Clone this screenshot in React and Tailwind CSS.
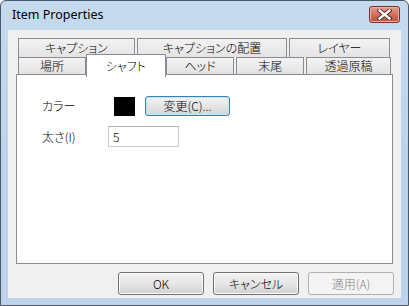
import React, { useState } from 'react';

const topTabs = [
  { label: 'キャプション', w: 'w-[117px]' },
  { label: 'キャプションの配置', w: 'w-[150px]' },
  { label: 'レイヤー', w: 'w-[101px]' },
];

const bottomTabs = [
  { label: '場所', w: 'w-[68px]' },
  { label: 'シャフト', w: 'w-[74px]' },
  { label: 'ヘッド', w: 'w-[69px]' },
  { label: '末尾', w: 'w-[68px]' },
  { label: '透過原稿', w: 'w-[85px]' },
];

const Tab = ({ label, w, selected, onClick }) => {
  if (selected) {
    return (
      <div
        onClick={onClick}
        className={`${w} relative z-10 mx-[-2px] mt-[-3px] h-[22px] box-content px-[2px] border border-b-0 border-[#898c95] bg-white flex items-center justify-center text-[12px] text-black`}
      >
        {label}
      </div>
    );
  }
  return (
    <div
      onClick={onClick}
      className={`${w} h-full border border-b-0 border-[#898c95] bg-gradient-to-b from-[#f3f3f3] to-[#e3e3e3] flex items-center justify-center text-[12px] text-black`}
    >
      {label}
    </div>
  );
};

const Button = ({ children, disabled }) => {
  if (disabled) {
    return (
      <div className="w-[86px] h-[23px] rounded-[3px] border border-[#adb2b5] bg-[#f4f4f4] flex items-center justify-center text-[12px] text-[#838383]">
        {children}
      </div>
    );
  }
  return (
    <div className="w-[86px] h-[23px] rounded-[3px] border border-[#707070] shadow-[inset_0_0_0_1px_#fcfcfc] bg-gradient-to-b from-[#f2f2f2] via-[#e6e6e6] to-[#d0d0d0] flex items-center justify-center text-[12px] text-black">
      {children}
    </div>
  );
};

export default function App() {
  const [tab, setTab] = useState('シャフト');
  const [width, setWidth] = useState('5');

  return (
    <div className="w-[409px] h-[306px] flex flex-col rounded-t-[6px] border border-[#4d5866] bg-gradient-to-b from-[#c6daef] via-[#bcd3eb] to-[#bcd3eb] overflow-hidden font-['Noto_Sans_CJK_JP','Liberation_Sans',sans-serif] font-light [font-feature-settings:'palt']">
      {/* title bar */}
      <div className="h-[29px] flex items-center justify-between pl-[11px] pr-[8px]">
        <span className="text-[12.5px] font-normal text-black font-['Noto_Sans',sans-serif]">
          Item Properties
        </span>
        <div className="w-[31px] h-[17px] mb-[2px] rounded-[3px] border border-[#7a2f26] bg-gradient-to-b from-[#e3a090] via-[#d0705f] to-[#c14a38] flex items-center justify-center shadow-[inset_0_0_0_1px_#eab3a6]">
          <svg width="15" height="11" viewBox="0 0 15 11">
            <path d="M2.5 1.5 L12.5 9.5 M12.5 1.5 L2.5 9.5" stroke="#5a2018" strokeWidth="4.2" strokeLinecap="square" />
            <path d="M2.5 1.5 L12.5 9.5 M12.5 1.5 L2.5 9.5" stroke="#ffffff" strokeWidth="2.4" strokeLinecap="square" />
          </svg>
        </div>
      </div>

      {/* client area */}
      <div className="mx-[7px] mb-[7px] flex-1 bg-[#f0f0f0] flex flex-col">
        <div className="pt-[8px] px-[8px]">
          <div className="h-[19px] flex gap-[2px] px-[2px]">
            {topTabs.map((t) => (
              <Tab key={t.label} {...t} selected={tab === t.label} onClick={() => setTab(t.label)} />
            ))}
          </div>
          <div className="h-[17px] flex gap-[2px] px-[2px] items-start">
            {bottomTabs.map((t) => (
              <Tab key={t.label} {...t} selected={tab === t.label} onClick={() => setTab(t.label)} />
            ))}
          </div>

          {/* panel */}
          <div className="h-[190px] border border-[#898c95] bg-white pl-[25px]">
            <div className="mt-[21px] h-[20px] flex items-center">
              <span className="w-[72px] text-[12px] text-black">カラー</span>
              <div className="w-[21px] h-[19px] bg-black"></div>
              <div className="ml-[10px] w-[85px] h-[20px] rounded-[3px] border border-[#3c7fb1] shadow-[inset_0_0_0_1px_#bde9fb] bg-gradient-to-b from-[#f2f2f2] via-[#e6e6e6] to-[#d4d4d4] flex items-center justify-center text-[12px] text-black">
                変更(C)...
              </div>
            </div>
            <div className="mt-[10px] h-[21px] flex items-center">
              <span className="w-[66px] text-[12px] text-black">太さ(I)</span>
              <input
                value={width}
                onChange={(e) => setWidth(e.target.value)}
                className="w-[71px] h-[21px] border border-[#c9cbcf] border-t-[#aeb1b6] px-[4px] text-[12px] text-black outline-none font-light"
              />
            </div>
          </div>
        </div>

        {/* dialog buttons */}
        <div className="mt-[8px] pr-[7px] flex justify-end gap-[9px]">
          <Button>OK</Button>
          <Button>キャンセル</Button>
          <Button disabled>適用(A)</Button>
        </div>
      </div>
    </div>
  );
}
